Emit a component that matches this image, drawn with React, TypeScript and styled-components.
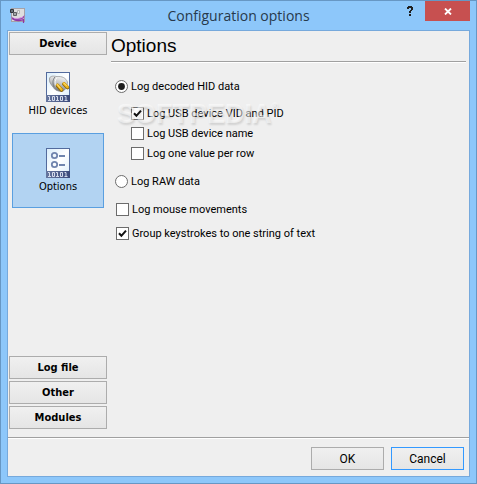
import React, { useState } from "react";
import styled, { createGlobalStyle } from "styled-components";

const GlobalStyle = createGlobalStyle`
  *, *::before, *::after { box-sizing: border-box; }
  body { margin: 0; font-family: Roboto, "Liberation Sans", sans-serif; font-size: 11px; color: #000; }
  button { font: inherit; color: inherit; margin: 0; padding: 0; }
`;

const Window = styled.div`
  display: flex;
  flex-direction: column;
  min-height: 100vh;
  padding: 0 6px 6px;
  border: 1px solid #6797c4;
  background: #8dc7fa;
`;

const TitleBar = styled.header`
  display: grid;
  grid-template-columns: 78px 1fr 78px;
  height: 29px;
`;

const AppIcon = styled.svg`
  width: 16px;
  height: 16px;
  margin: 7px 0 0 3px;
`;

const Title = styled.h1`
  margin: 0;
  font: 400 14px/30px "Open Sans", "Noto Sans", sans-serif;
  text-align: center;
  white-space: nowrap;
  color: #27394b;
`;

const TitleControls = styled.div`
  display: flex;
  justify-content: flex-end;
  gap: 6px;
`;

const TitleButton = styled.button<{ $danger?: boolean }>`
  display: grid;
  place-items: center;
  width: ${(p) => (p.$danger ? 45 : 17)}px;
  height: 20px;
  border: 0;
  background: ${(p) => (p.$danger ? "#c75050" : "transparent")};
`;

const Client = styled.div`
  flex: 1;
  display: flex;
  flex-direction: column;
  border: 1px solid #76a9dc;
  background: #efefef;
`;

const Body = styled.div`
  flex: 1;
  display: flex;
  gap: 4px;
  padding: 1px 3px 8px 1px;
`;

const Sidebar = styled.nav`
  display: flex;
  flex-direction: column;
  gap: 2px;
  width: 98px;
`;

const SectionButton = styled.button`
  height: 23px;
  border: 1px solid #acacac;
  background: linear-gradient(#f0f0f0, #e5e5e5);
  font: 700 11px/20px "DejaVu Sans Condensed", "DejaVu Sans", sans-serif;
`;

const ItemList = styled.div`
  flex: 1;
  display: flex;
  flex-direction: column;
  gap: 1px;
  padding: 0 3px;
`;

const NavItem = styled.button<{ $selected: boolean }>`
  display: flex;
  flex-direction: column;
  align-items: center;
  gap: 2px;
  height: 75px;
  padding-top: 14px;
  border: 1px solid ${(p) => (p.$selected ? "#5a9fe0" : "transparent")};
  background: ${(p) => (p.$selected ? "#b2d3f2" : "transparent")};
  font: 400 11px/14px "DejaVu Sans Condensed", "DejaVu Sans", sans-serif;
`;

const Main = styled.main`
  flex: 1;
  min-width: 0;
`;

const Heading = styled.h2`
  margin: 0 0 18px;
  height: 30px;
  border-bottom: 1px solid #a0a0a0;
  box-shadow: 0 1px #fff;
  font: 400 19px/28px "Liberation Sans", Arial, sans-serif;
`;

const OptionList = styled.div`
  position: relative;
  display: flex;
  flex-direction: column;
  align-items: flex-start;
  padding-left: 4px;
`;

const Nested = styled.div`
  display: flex;
  flex-direction: column;
  align-items: flex-start;
  gap: 7px;
  padding: 14px 0 15px 16px;
`;

const OptionGroup = styled.div`
  display: flex;
  flex-direction: column;
  align-items: flex-start;
  gap: 11px;
  padding: 15px 0 0 1px;
`;

const Option = styled.label`
  display: flex;
  align-items: center;
  gap: 3px;
  height: 13px;
  line-height: 14px;
  white-space: nowrap;
`;

const ControlCell = styled.span`
  display: grid;
  width: 13px;
  height: 13px;
  & > * { grid-area: 1 / 1; }
`;

const ControlInput = styled.input`
  appearance: none;
  width: 13px;
  height: 13px;
  margin: 0;
  border: 1px solid #6c6c6c;
  border-radius: ${(p) => (p.type === "radio" ? "50%" : "0")};
  background: #fff;
`;

const Mark = styled.svg`
  z-index: 1;
  width: 13px;
  height: 13px;
  pointer-events: none;
`;

const Watermark = styled.span`
  position: absolute;
  left: 6px;
  top: 16px;
  font: 700 27px/36px "Liberation Sans", Arial, sans-serif;
  color: rgba(255, 255, 255, 0.5);
  text-shadow: 1px 2px 2px rgba(0, 0, 0, 0.12);
  pointer-events: none;
  user-select: none;
  sup { font-size: 9px; line-height: 0; vertical-align: 14px; }
`;

const Footer = styled.footer`
  display: flex;
  justify-content: flex-end;
  gap: 7px;
  padding: 9px 5px 6px;
  border-top: 1px solid #a0a0a0;
  box-shadow: inset 0 1px #fff;
`;

const DialogButton = styled.button<{ $primary?: boolean }>`
  width: 73px;
  height: 23px;
  border: 1px solid ${(p) => (p.$primary ? "#3399ff" : "#acacac")};
  background: linear-gradient(#f0f0f0, #e5e5e5);
  font-size: 12px;
`;

function Choice(props: {
  type: "radio" | "checkbox";
  label: string;
  checked: boolean;
  onChange: () => void;
}) {
  const { type, label, checked, onChange } = props;
  return (
    <Option>
      <ControlCell>
        <ControlInput type={type} checked={checked} onChange={onChange} />
        {checked && (
          <Mark viewBox="0 0 13 13" aria-hidden="true">
            {type === "radio" ? (
              <circle cx="6.5" cy="6.5" r="3.4" fill="#1c1c1c" />
            ) : (
              <path d="M3 6.2 5.4 8.8 10 3.6" fill="none" stroke="#111" strokeWidth="2" />
            )}
          </Mark>
        )}
      </ControlCell>
      {label}
    </Option>
  );
}

function PageFrame({ id, children }: { id: string; children: React.ReactNode }) {
  return (
    <svg width="24" height="30" viewBox="0 0 24 30" aria-hidden="true">
      <defs>
        <linearGradient id={id} x1="0" y1="0" x2="1" y2="1">
          <stop offset="0" stopColor="#d9edfb" />
          <stop offset="0.5" stopColor="#fff" />
          <stop offset="1" stopColor="#d8ecf9" />
        </linearGradient>
        <linearGradient id={id + "-band"}>
          <stop offset="0" stopColor="#66769f" />
          <stop offset="1" stopColor="#3b4a7a" />
        </linearGradient>
      </defs>
      <rect x="0.5" y="0.5" width="23" height="29" fill={`url(#${id})`} stroke="#536b9d" />
      <rect y="23" width="24" height="7" fill={`url(#${id}-band)`} />
      <path
        d="M2 24.5h1.500V28M2 28.500h3M6.500 24.500h2v4h-2zM10 24.500h1.500V28M10 28.500h3M14.500 24.500h2v4h-2zM18.500 24.500H20V28M18.500 28.500h3"
        fill="none"
        stroke="#e3e9f5"
        strokeWidth="0.9"
      />
      {children}
    </svg>
  );
}

function PlugIcon() {
  return (
    <PageFrame id="plug">
      <defs>
        <linearGradient id="metal" x1="0.6" y1="0" x2="0.3" y2="1">
          <stop offset="0" stopColor="#f4f4f4" />
          <stop offset="0.5" stopColor="#bebfc0" />
          <stop offset="1" stopColor="#626568" />
        </linearGradient>
      </defs>
      <path
        d="M3.5 6C5 3.500 8 4 11 4.600c5-.6 9 1.400 10.500 5.400 0 4-1.500 8-5.500 9.500-4 0-7.500-1.500-9-4.500C5 12.500 2.800 10 3.500 6Z"
        fill="url(#metal)"
        stroke="#8b8d8f"
        strokeWidth="0.7"
      />
      <path d="M9 5C6.500 8 6.500 11 8 15" fill="none" stroke="#76797c" />
      <path d="M11 5.500c-2 2-2.500 6-1 9" fill="none" stroke="#fff" strokeWidth="0.8" />
      <path d="m11.500 13.500 4 4.500M18 12l3.500 3.500" stroke="#8b6500" strokeWidth="3.600" strokeLinecap="round" />
      <path d="m11.500 13 4 4.500M18 11.500l3.500 3.500" stroke="#f1b71c" strokeWidth="2.600" strokeLinecap="round" />
      <path d="m11.200 12.500 3 3.500M17.700 11l2.500 2.500" stroke="#ffe58b" strokeLinecap="round" />
    </PageFrame>
  );
}

function SettingsIcon() {
  return (
    <PageFrame id="settings">
      <g fill="none" stroke="#7085ae" strokeWidth="1.800">
        <circle cx="8.500" cy="7.500" r="2.700" />
        <circle cx="8.500" cy="16.500" r="2.700" />
        <path d="M13 8h6M13 17h6" />
      </g>
    </PageFrame>
  );
}

const sections = ["Log file", "Other", "Modules"];

export default function App() {
  const [page, setPage] = useState("Options");
  const [mode, setMode] = useState("decoded");
  const [flags, setFlags] = useState({ ids: true, name: false, single: false, mouse: false, group: true });
  const check = (key: keyof typeof flags, label: string) => (
    <Choice
      type="checkbox"
      label={label}
      checked={flags[key]}
      onChange={() => setFlags({ ...flags, [key]: !flags[key] })}
    />
  );
  return (
    <>
      <GlobalStyle />
      <Window>
        <TitleBar>
          <AppIcon viewBox="0 0 16 16" aria-hidden="true">
            <rect x="1.500" y="0.500" width="13" height="13" fill="#dedede" stroke="#a5a2a8" />
            <path d="M1 8c2 3 8 3 12 .5l1.500-1.500-.5 3c-4 2.500-8 3-11.500 1Z" fill="#9a4bb0" />
            <path d="M4 10c3 .8 6 .3 9-1.200" fill="none" stroke="#e8b7ef" strokeWidth="0.8" />
            <path d="M2 10.500c4 3 8 2.500 11.500 1V15" fill="none" stroke="#8e36a3" strokeWidth="1.200" />
            <path d="M0.500 1.500h3v3h-3z" fill="#687078" stroke="#30353b" />
            <path d="M3.500 4.500h3v3h-3z" fill="#a3a5a8" stroke="#5e6063" />
            <path d="M7.500 2.500h2v3h-2z" fill="#eee" stroke="#b5b5b5" />
          </AppIcon>
          <Title>Configuration options</Title>
          <TitleControls>
            <TitleButton aria-label="Help">
              <svg width="7" height="11" viewBox="0 0 7 11" shapeRendering="crispEdges" aria-hidden="true">
                <path d="M1 0h4v1h1v3H5v1H4v2H2V5h1V4h1V2H2v1H0V1h1zM2 8h2v2H2z" fill="#202020" />
              </svg>
            </TitleButton>
            <TitleButton $danger aria-label="Close">
              <svg width="8" height="7" viewBox="0 0 8 7" aria-hidden="true">
                <path d="m1 .5 6 6M7 .5l-6 6" stroke="#fff" strokeWidth="1.800" />
              </svg>
            </TitleButton>
          </TitleControls>
        </TitleBar>
        <Client>
          <Body>
            <Sidebar>
              <SectionButton>Device</SectionButton>
              <ItemList>
                <NavItem $selected={page === "HID devices"} onClick={() => setPage("HID devices")}>
                  <PlugIcon />
                  HID devices
                </NavItem>
                <NavItem $selected={page === "Options"} onClick={() => setPage("Options")}>
                  <SettingsIcon />
                  Options
                </NavItem>
              </ItemList>
              {sections.map((name) => (
                <SectionButton key={name}>{name}</SectionButton>
              ))}
            </Sidebar>
            <Main>
              <Heading>Options</Heading>
              <OptionList>
                <Choice type="radio" label="Log decoded HID data" checked={mode === "decoded"} onChange={() => setMode("decoded")} />
                <Nested>
                  {check("ids", "Log USB device VID and PID")}
                  {check("name", "Log USB device name")}
                  {check("single", "Log one value per row")}
                </Nested>
                <Choice type="radio" label="Log RAW data" checked={mode === "raw"} onChange={() => setMode("raw")} />
                <OptionGroup>
                  {check("mouse", "Log mouse movements")}
                  {check("group", "Group keystrokes to one string of text")}
                </OptionGroup>
                <Watermark aria-hidden="true">
                  SOFTPEDIA<sup>®</sup>
                </Watermark>
              </OptionList>
            </Main>
          </Body>
          <Footer>
            <DialogButton>OK</DialogButton>
            <DialogButton $primary>Cancel</DialogButton>
          </Footer>
        </Client>
      </Window>
    </>
  );
}
